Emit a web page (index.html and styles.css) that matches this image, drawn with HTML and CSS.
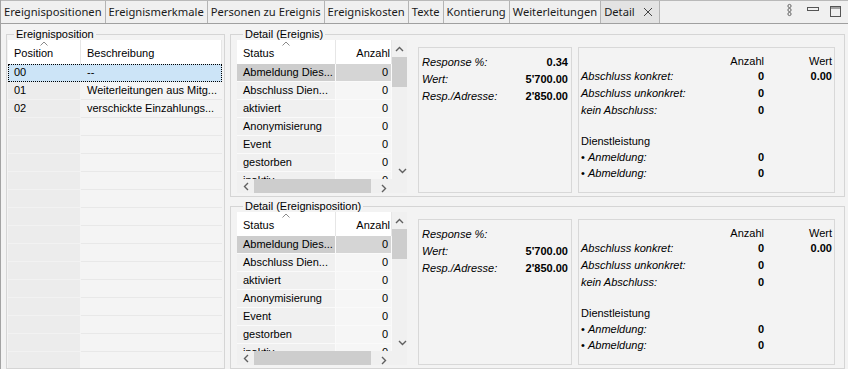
FILE: index.html
```html
<!DOCTYPE html>
<html>
  <head>
    <meta charset="utf-8" />
    <title>Detail</title>
    <link rel="stylesheet" href="styles.css">
  </head>
  <body>
    <div class="window">
      <div class="tabbar">
        <div class="tab">Ereignispositionen</div>
        <div class="tab">Ereignismerkmale</div>
        <div class="tab">Personen zu Ereignis</div>
        <div class="tab">Ereigniskosten</div>
        <div class="tab">Texte</div>
        <div class="tab">Kontierung</div>
        <div class="tab">Weiterleitungen</div>
        <div class="tab active">
          Detail
          <svg class="close" width="10" height="10" viewBox="0 0 10 10"><path d="M1 1 L9 9 M9 1 L1 9" stroke="#444" stroke-width="1" fill="none"/></svg>
        </div>
        <div class="tab-tools">
          <svg width="7" height="14" viewBox="0 0 7 14"><circle cx="3.5" cy="3" r="1.6" stroke="#666" fill="none"/><circle cx="3.5" cy="7" r="1.6" stroke="#666" fill="none"/><circle cx="3.5" cy="11" r="1.6" stroke="#666" fill="none"/></svg>
          <svg class="tool-min" width="14" height="14" viewBox="0 0 14 14"><rect x="1.5" y="4.5" width="11" height="3" stroke="#555" fill="none"/></svg>
          <svg class="tool-max" width="12" height="14" viewBox="0 0 12 14"><rect x="1.5" y="3.5" width="10" height="10" stroke="#555" fill="none"/><path d="M1.5 5 H11.5" stroke="#555"/></svg>
        </div>
      </div>

      <div class="content">
        <fieldset class="group pos-group">
          <legend>Ereignisposition</legend>
          <div class="list">
            <div class="row head">
              <div class="hcell"><svg class="caret" width="8" height="5" viewBox="0 0 8 5"><path d="M0.5 4.5 L4 1 L7.5 4.5" stroke="#8a8a8a" fill="none"/></svg><span>Position</span></div>
              <div class="hcell"><span class="nocaret"></span><span>Beschreibung</span></div>
            </div>
            <div class="row selected"><div class="cell">00</div><div class="cell">--</div></div>
            <div class="row"><div class="cell">01</div><div class="cell">Weiterleitungen aus Mitg...</div></div>
            <div class="row"><div class="cell">02</div><div class="cell">verschickte Einzahlungs...</div></div>
            <div class="row"><div class="cell"></div><div class="cell"></div></div>
            <div class="row"><div class="cell"></div><div class="cell"></div></div>
            <div class="row"><div class="cell"></div><div class="cell"></div></div>
            <div class="row"><div class="cell"></div><div class="cell"></div></div>
            <div class="row"><div class="cell"></div><div class="cell"></div></div>
            <div class="row"><div class="cell"></div><div class="cell"></div></div>
            <div class="row"><div class="cell"></div><div class="cell"></div></div>
            <div class="row"><div class="cell"></div><div class="cell"></div></div>
            <div class="row"><div class="cell"></div><div class="cell"></div></div>
            <div class="row"><div class="cell"></div><div class="cell"></div></div>
            <div class="row"><div class="cell"></div><div class="cell"></div></div>
            <div class="row"><div class="cell"></div><div class="cell"></div></div>
            <div class="row"><div class="cell"></div><div class="cell"></div></div>
            <div class="row"><div class="cell"></div><div class="cell"></div></div>
          </div>
        </fieldset>

        <div class="detail-col">
          <fieldset class="group detail-group">
            <legend>Detail (Ereignis)</legend>
            <div class="stable">
              <div class="sview">
                <div class="srow head">
                  <div class="hcell"><svg class="caret" width="8" height="5" viewBox="0 0 8 5"><path d="M0.5 4.5 L4 1 L7.5 4.5" stroke="#8a8a8a" fill="none"/></svg><span>Status</span></div>
                  <div class="hcell num"><span class="nocaret"></span><span>Anzahl</span></div>
                </div>
                <div class="srow selected"><div class="cell">Abmeldung Dies...</div><div class="cell num">0</div></div>
                <div class="srow"><div class="cell">Abschluss Dien...</div><div class="cell num">0</div></div>
                <div class="srow"><div class="cell">aktiviert</div><div class="cell num">0</div></div>
                <div class="srow"><div class="cell">Anonymisierung</div><div class="cell num">0</div></div>
                <div class="srow"><div class="cell">Event</div><div class="cell num">0</div></div>
                <div class="srow"><div class="cell">gestorben</div><div class="cell num">0</div></div>
                <div class="srow"><div class="cell">inaktiv</div><div class="cell num">0</div></div>
              </div>
              <div class="vscroll">
                <div class="sbtn"><svg width="9" height="6" viewBox="0 0 9 6"><path d="M1 5 L4.5 1.5 L8 5" stroke="#606060" stroke-width="1.4" fill="none"/></svg></div>
                <div class="vthumb"></div>
                <div class="sbtn end"><svg width="9" height="6" viewBox="0 0 9 6"><path d="M1 1 L4.5 4.5 L8 1" stroke="#606060" stroke-width="1.4" fill="none"/></svg></div>
              </div>
              <div class="hscroll">
                <div class="sbtn"><svg width="6" height="9" viewBox="0 0 6 9"><path d="M5 1 L1.5 4.5 L5 8" stroke="#606060" stroke-width="1.4" fill="none"/></svg></div>
                <div class="hthumb"></div>
                <div class="sbtn end"><svg width="6" height="9" viewBox="0 0 6 9"><path d="M1 1 L4.5 4.5 L1 8" stroke="#606060" stroke-width="1.4" fill="none"/></svg></div>
              </div>
              <div class="corner"></div>
            </div>

            <div class="box kv">
              <div class="kv-row"><span class="lbl">Response %:</span><b>0.34</b></div>
              <div class="kv-row"><span class="lbl">Wert:</span><b>5'700.00</b></div>
              <div class="kv-row"><span class="lbl">Resp./Adresse:</span><b>2'850.00</b></div>
            </div>

            <div class="box stats">
              <div class="stats-head"><span></span><span>Anzahl</span><span>Wert</span></div>
              <div class="stats-row"><span class="lbl">Abschluss konkret:</span><b>0</b><b>0.00</b></div>
              <div class="stats-row"><span class="lbl">Abschluss unkonkret:</span><b>0</b><span></span></div>
              <div class="stats-row"><span class="lbl">kein Abschluss:</span><b>0</b><span></span></div>
              <div class="stats-title">Dienstleistung</div>
              <div class="stats-sub"><span>• <i>Anmeldung:</i></span><b>0</b><span></span></div>
              <div class="stats-sub"><span>• <i>Abmeldung:</i></span><b>0</b><span></span></div>
            </div>
          </fieldset>

          <fieldset class="group detail-group">
            <legend>Detail (Ereignisposition)</legend>
            <div class="stable">
              <div class="sview">
                <div class="srow head">
                  <div class="hcell"><svg class="caret" width="8" height="5" viewBox="0 0 8 5"><path d="M0.5 4.5 L4 1 L7.5 4.5" stroke="#8a8a8a" fill="none"/></svg><span>Status</span></div>
                  <div class="hcell num"><span class="nocaret"></span><span>Anzahl</span></div>
                </div>
                <div class="srow selected"><div class="cell">Abmeldung Dies...</div><div class="cell num">0</div></div>
                <div class="srow"><div class="cell">Abschluss Dien...</div><div class="cell num">0</div></div>
                <div class="srow"><div class="cell">aktiviert</div><div class="cell num">0</div></div>
                <div class="srow"><div class="cell">Anonymisierung</div><div class="cell num">0</div></div>
                <div class="srow"><div class="cell">Event</div><div class="cell num">0</div></div>
                <div class="srow"><div class="cell">gestorben</div><div class="cell num">0</div></div>
                <div class="srow"><div class="cell">inaktiv</div><div class="cell num">0</div></div>
              </div>
              <div class="vscroll">
                <div class="sbtn"><svg width="9" height="6" viewBox="0 0 9 6"><path d="M1 5 L4.5 1.5 L8 5" stroke="#606060" stroke-width="1.4" fill="none"/></svg></div>
                <div class="vthumb"></div>
                <div class="sbtn end"><svg width="9" height="6" viewBox="0 0 9 6"><path d="M1 1 L4.5 4.5 L8 1" stroke="#606060" stroke-width="1.4" fill="none"/></svg></div>
              </div>
              <div class="hscroll">
                <div class="sbtn"><svg width="6" height="9" viewBox="0 0 6 9"><path d="M5 1 L1.5 4.5 L5 8" stroke="#606060" stroke-width="1.4" fill="none"/></svg></div>
                <div class="hthumb"></div>
                <div class="sbtn end"><svg width="6" height="9" viewBox="0 0 6 9"><path d="M1 1 L4.5 4.5 L1 8" stroke="#606060" stroke-width="1.4" fill="none"/></svg></div>
              </div>
              <div class="corner"></div>
            </div>

            <div class="box kv">
              <div class="kv-row"><span class="lbl">Response %:</span><b></b></div>
              <div class="kv-row"><span class="lbl">Wert:</span><b>5'700.00</b></div>
              <div class="kv-row"><span class="lbl">Resp./Adresse:</span><b>2'850.00</b></div>
            </div>

            <div class="box stats">
              <div class="stats-head"><span></span><span>Anzahl</span><span>Wert</span></div>
              <div class="stats-row"><span class="lbl">Abschluss konkret:</span><b>0</b><b>0.00</b></div>
              <div class="stats-row"><span class="lbl">Abschluss unkonkret:</span><b>0</b><span></span></div>
              <div class="stats-row"><span class="lbl">kein Abschluss:</span><b>0</b><span></span></div>
              <div class="stats-title">Dienstleistung</div>
              <div class="stats-sub"><span>• <i>Anmeldung:</i></span><b>0</b><span></span></div>
              <div class="stats-sub"><span>• <i>Abmeldung:</i></span><b>0</b><span></span></div>
            </div>
          </fieldset>
        </div>
      </div>
    </div>
  </body>
</html>
```

FILE: styles.css
```css
* {
  box-sizing: border-box;
}
body {
  margin: 0;
  width: 848px;
  height: 369px;
  overflow: hidden;
  background: #f3f3f3;
  font-family: "Liberation Sans", Arial, sans-serif;
  font-size: 11px;
  color: #000;
}
.window {
  height: 369px;
  display: flex;
  flex-direction: column;
  border-left: 1px solid #a3a3a3;
}

/* tabs */
.tabbar {
  height: 24px;
  flex: none;
  display: flex;
  background: #f0f0f0;
  border-top: 1px solid #b9b9b9;
  border-bottom: 1px solid #a0a0a0;
  font-family: "Noto Sans", sans-serif;
  font-size: 11.2px;
  color: #1a1a1a;
}
.tab {
  padding: 0 3px 0 3px;
  line-height: 22px;
  border-right: 1px solid #b4b4b4;
  white-space: nowrap;
}
.tab.active {
  background: #e3e3e3;
  padding-right: 6px;
  display: flex;
  align-items: center;
  gap: 8px;
}
.tab-tools {
  margin-left: auto;
  display: flex;
  align-items: flex-start;
  padding: 2px 7px 0 0;
}
.tool-min {
  margin-left: 13px;
}
.tool-max {
  margin-left: 9px;
}

/* layout */
.content {
  flex: 1;
  min-height: 0;
  display: flex;
  gap: 5px;
  padding: 4px 3px 0 5px;
}
.group {
  margin: 0;
  padding: 0;
  min-width: 0;
  min-height: 0;
  border: 1px solid #d5d5d5;
}
.group legend {
  margin-left: 6px;
  padding: 0 2px;
  line-height: 12px;
  font-size: 11px;
}
.pos-group {
  width: 219px;
  display: flex;
  flex-direction: column;
  padding: 0 2px 0 1px;
}
.detail-col {
  flex: 1;
  min-height: 0;
  display: flex;
  flex-direction: column;
  gap: 3px;
}
.detail-group {
  flex: 1 1 0;
  display: flex;
  padding: 0 9px 3px 6px;
}

/* header cells */
.hcell {
  display: flex;
  flex-direction: column;
  background: #fff;
  border-right: 1px solid #e6e6e6;
  padding: 0 6px;
}
.hcell .caret {
  align-self: center;
  margin-top: 1px;
}
.hcell .nocaret {
  height: 6px;
}
.hcell span:last-child {
  line-height: 13px;
  padding-top: 1px;
}
.hcell.num {
  align-items: flex-end;
  padding-right: 1px;
}

/* left list */
.list {
  flex: 1;
  min-height: 0;
  overflow: hidden;
}
.row {
  display: grid;
  grid-template-columns: 73px 1fr;
  height: 18px;
}
.row.head {
  height: 24px;
}
.row .cell {
  line-height: 17px;
  padding-left: 6px;
  background: #f4f4f4;
  border-bottom: 1px solid #e8e8e8;
  white-space: nowrap;
  overflow: hidden;
}
.row .cell:first-child {
  background: #ececec;
  border-bottom-color: #f2f2f2;
  border-right: 1px solid #f4f4f4;
}
.row.selected {
  outline: 1px dotted #000;
  outline-offset: -1px;
}
.row.selected .cell {
  background: #cce4f7;
  border-bottom-color: #cce4f7;
  border-right-color: #cce4f7;
}

/* status table */
.stable {
  width: 170px;
  flex: none;
  min-height: 0;
  display: grid;
  grid-template-columns: 155px 15px;
  grid-template-rows: minmax(0, 1fr) 14px;
  margin-right: 11px;
}
.sview {
  min-height: 0;
  overflow: hidden;
  background: #f3f3f3;
}
.srow {
  display: grid;
  grid-template-columns: 99px 56px;
  height: 18px;
}
.srow.head {
  height: 24px;
}
.srow .cell {
  line-height: 17px;
  padding-left: 6px;
  background: #f0f0f0;
  border-bottom: 1px solid #fafafa;
  border-right: 1px solid #fafafa;
  white-space: nowrap;
  overflow: hidden;
}
.srow .cell.num {
  background: #f6f6f6;
  text-align: right;
  padding-right: 3px;
}
.srow.selected .cell {
  background: #cdcdcd;
}
.srow.selected .cell.num {
  background: #d5d5d5;
}
.vscroll {
  min-height: 0;
  background: #f0f0f0;
  display: flex;
  flex-direction: column;
}
.vscroll .sbtn {
  height: 17px;
}
.vthumb {
  height: 30px;
  flex: none;
  background: #cdcdcd;
}
.hscroll {
  background: #f0f0f0;
  display: flex;
}
.hscroll .sbtn {
  width: 17px;
}
.hthumb {
  width: 117px;
  background: #cdcdcd;
}
.sbtn {
  display: flex;
  align-items: center;
  justify-content: center;
  flex: none;
}
.sbtn.end {
  margin-left: auto;
  margin-top: auto;
}
.corner {
  background: #f0f0f0;
}

/* value boxes */
.box {
  border: 1px solid #d8d8d8;
  margin-top: 7px;
}
.box .lbl,
.box i {
  font-style: italic;
}
.kv {
  width: 154px;
  flex: none;
  margin-right: 6px;
  padding: 6px 3px 0;
}
.kv-row {
  display: flex;
  justify-content: space-between;
  line-height: 17px;
}
.stats {
  flex: 1;
  padding: 6px 2px 0;
  display: grid;
  grid-template-columns: 1fr 70px 68px;
  grid-auto-rows: min-content;
  align-content: start;
}
.stats-head,
.stats-row,
.stats-sub {
  display: contents;
}
.stats-head span {
  line-height: 14px;
  text-align: right;
}
.stats-row > *,
.stats-sub > * {
  line-height: 17px;
}
.stats-sub > * {
  line-height: 16px;
}
.stats b {
  text-align: right;
}
.stats-title {
  grid-column: 1 / -1;
  margin-top: 14px;
  line-height: 16px;
}
```
